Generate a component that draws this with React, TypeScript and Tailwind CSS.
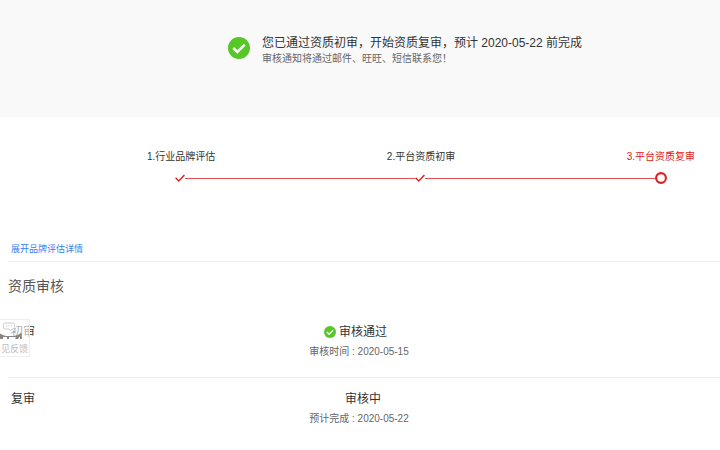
const records = [
  { stage: "初审", status: "审核通过", label: "审核时间", date: "2020-05-15", passed: true },
  { stage: "复审", status: "审核中", label: "预计完成", date: "2020-05-22", passed: false },
];

function PassedIcon({ className }: { className: string }) {
  return (
    <svg viewBox="0 0 22 22" className={className} aria-hidden="true">
      <circle cx="11" cy="11" r="11" fill="#55c726" />
      <path d="M5.2 11l4.1 4 7.4-7.400" fill="none" stroke="#fff" strokeWidth="2.5" />
    </svg>
  );
}

function StepCheck() {
  return (
    <svg viewBox="0 0 10 10" className="h-[10px] w-[10px] shrink-0" aria-hidden="true">
      <path d="M0.6 4.800l3.200 3.200L9.400 2" fill="none" stroke="#dd2020" strokeWidth="1.4" />
    </svg>
  );
}

function StepCurrent() {
  return (
    <svg viewBox="0 0 12 12" className="h-3 w-3 shrink-0" aria-hidden="true">
      <circle cx="6" cy="6" r="4.9" fill="#fff" stroke="#dd2020" strokeWidth="2.1" />
    </svg>
  );
}

function FeedbackButton() {
  return (
    <button
      type="button"
      className="absolute top-2 left-0 flex h-[38px] w-[30px] flex-col overflow-hidden border border-l-0 border-[#eeeeee] bg-white/60"
    >
      <svg viewBox="0 0 26 21" className="h-[21px] w-[26px] shrink-0" aria-hidden="true">
        <path
          d="M5 3h8q1.500 0 1.500 1.500v3q0 1.500-1.500 1.500h-1l-1.500 2-1.500-2H5q-1.500 0-1.500-1.500v-3Q3.500 3 5 3z"
          fill="#fff"
          stroke="#ccc"
        />
        <path d="M6 6h1M8.500 6h1M11 6h1" stroke="#bbb" />
        <path
          d="M0 13.500l3 1.500 3 1h8l4-1 3.500-2.500.5 6.500h-2v-3l-2 3h-3l1-2H9v2H7v-2H3v2H0v-2z"
          fill="#8a8584"
        />
      </svg>
      <span className="text-[9px] leading-4 whitespace-nowrap text-[#bbb]">见反馈</span>
    </button>
  );
}

export default function App() {
  return (
    <main className="min-h-screen overflow-hidden bg-white font-['Liberation_Sans','Noto_Sans_CJK_SC',sans-serif] text-[#333]">
      <header className="flex h-[117px] gap-3 bg-[#f9f9f9] pt-[35px] pl-[228px]">
        <PassedIcon className="mt-[2px] h-[22px] w-[22px] shrink-0" />
        <div>
          <h1 className="text-xs leading-4">您已通过资质初审，开始资质复审，预计 2020-05-22 前完成</h1>
          <p className="text-[10px] leading-4 text-[#666]">审核通知将通过邮件、旺旺、短信联系您！</p>
        </div>
      </header>

      <section className="pt-8">
        <ol className="flex justify-between pr-[25px] pl-[147px] text-[10px] leading-4">
          <li>1.行业品牌评估</li>
          <li>2.平台资质初审</li>
          <li className="text-[#dd2020]">3.平台资质复审</li>
        </ol>
        <div className="mt-[7px] flex h-3 items-center pr-[53px] pl-[175px]">
          <StepCheck />
          <span className="h-px flex-1 bg-[#e65050]" />
          <StepCheck />
          <span className="h-px flex-1 bg-[#e65050]" />
          <StepCurrent />
        </div>
      </section>

      <div className="mt-[57px] ml-2 border-b border-[#eeeeee] pb-1 pl-[3px]">
        <a href="#detail" className="block text-[9px] leading-4 text-[#3080f0]">
          展开品牌评估详情
        </a>
      </div>

      <section>
        <h2 className="pt-[14px] pl-2 text-sm leading-5 text-[#555]">资质审核</h2>
        <div className="relative mt-[15px]">
          {records.map((record) => (
            <div key={record.stage} className="ml-2 flex h-[67px] border-b border-[#eeeeee] pt-[13px] pl-[3px] last-of-type:border-b-0">
              <h3 className="w-[228px] shrink-0 text-xs leading-4">{record.stage}</h3>
              <div className="w-[240px] text-center">
                <p className="flex items-center justify-center gap-[3px] pl-2 text-xs leading-4">
                  {record.passed && <PassedIcon className="-ml-[15px] h-3 w-3" />}
                  {record.status}
                </p>
                <p className="mt-1 text-[10px] leading-4 text-[#666]">
                  {record.label} : {record.date}
                </p>
              </div>
            </div>
          ))}
          <FeedbackButton />
        </div>
      </section>
    </main>
  );
}
